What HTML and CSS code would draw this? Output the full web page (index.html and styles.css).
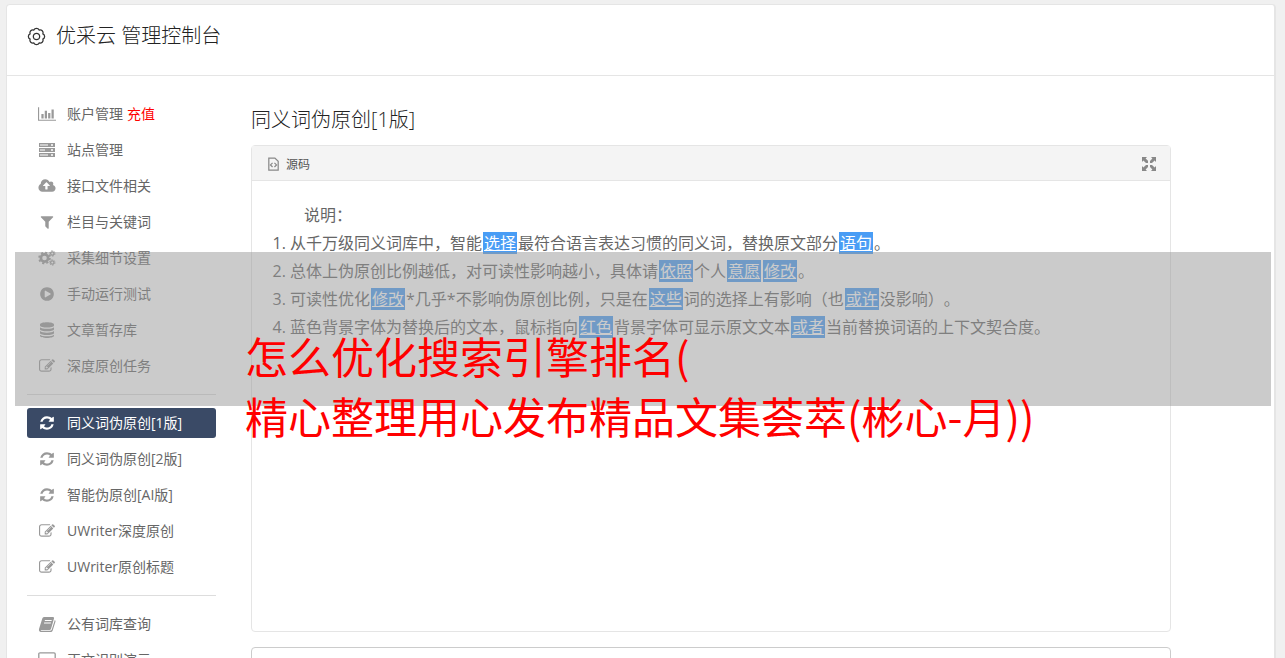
FILE: index.html
```html
<!DOCTYPE html>
<html lang="zh-CN">
<head>
    <meta charset="UTF-8">
    <meta name="viewport" content="width=device-width, initial-scale=1.0">
    <title>优采云 管理控制台</title>
    <link rel="stylesheet" href="styles.css">
</head>
<body>
    <!-- icon sprite -->
    <svg class="sprite" aria-hidden="true">
        <symbol id="i-chart" viewBox="0 0 2048 1792"><path d="M640 896v512h-256v-512h256zm384-384v896h-256v-896h256zm1024 1024v128h-2048v-1536h128v1408h1920zm-640-768v640h-256v-640h256zm384-384v1024h-256v-1024h256z"/></symbol>
        <symbol id="i-server" viewBox="0 0 18 16"><path fill-rule="evenodd" d="M1 1h16v4H1zM2 2.500h8v1H2zM13 2.200h2v1.600h-2zM1 6h16v4H1zM2 7.500h5v1H2zM13 7.200h2v1.600h-2zM1 11h16v4H1zM2 12.500h8v1H2zM13 12.200h2v1.600h-2z"/></symbol>
        <symbol id="i-cloud" viewBox="0 0 1920 1792"><path d="M1280 864q0-14-9-23l-352-352q-9-9-23-9t-23 9l-351 351q-10 12-10 24 0 14 9 23t23 9h224v352q0 13 9.500 22.500t22.500 9.500h192q13 0 22.500-9.500t9.500-22.500v-352h224q13 0 22.500-9.500t9.500-22.500zm640 288q0 159-112.500 271.500t-271.500 112.500h-1088q-185 0-316.500-131.500t-131.500-316.500q0-130 70-240t188-165q-2-30-2-43 0-212 150-362t362-150q156 0 285.500 87t188.500 231q71-62 166-62 106 0 181 75t75 181q0 76-41 138 130 31 213.500 135.500t83.500 238.500z"/></symbol>
        <symbol id="i-filter" viewBox="0 0 1792 1792"><path d="M1595 295q17 41-14 70l-493 493v742q0 42-39 59-13 5-25 5-27 0-45-19l-256-256q-19-19-19-45v-486l-493-493q-31-29-14-70 17-39 59-39h1280q42 0 59 39z"/></symbol>
        <symbol id="i-cogs" viewBox="0 0 18 16">
            <g fill="none" stroke="currentColor">
                <circle cx="6.500" cy="8" r="3.600" stroke-width="2.600"/>
                <circle cx="6.500" cy="8" r="5.400" stroke-width="1.800" stroke-dasharray="2.120 2.120"/>
                <circle cx="14.300" cy="3.500" r="1.700" stroke-width="1.300"/>
                <circle cx="14.300" cy="3.500" r="2.700" stroke-width="1" stroke-dasharray="1.400 1.420"/>
                <circle cx="14.300" cy="12.500" r="1.700" stroke-width="1.300"/>
                <circle cx="14.300" cy="12.500" r="2.700" stroke-width="1" stroke-dasharray="1.400 1.420"/>
            </g>
        </symbol>
        <symbol id="i-play" viewBox="0 0 1792 1792"><path d="M896 128q209 0 385.500 103t279.500 279.500 103 385.500-103 385.500-279.500 279.500-385.500 103-385.500-103-279.500-279.500-103-385.500 103-385.500 279.500-279.500 385.500-103zm384 823q32-18 32-55t-32-55l-544-320q-31-19-64-1-32 19-32 56v640q0 37 32 56 16 8 32 8 17 0 32-9z"/></symbol>
        <symbol id="i-database" viewBox="0 0 16 16"><path d="M1 2.500C1 -.5 15 -.5 15 2.500v1C15 6.300 1 6.300 1 3.500zM1 5.200c2 2.200 12 2.200 14 0v2c0 2.700-14 2.700-14 0zM1 9c2 2.200 12 2.200 14 0v2c0 2.700-14 2.700-14 0zM1 12.700c2 2.200 12 2.200 14 0v1c0 2.900-14 2.900-14 0z"/></symbol>
        <symbol id="i-edit" viewBox="0 0 1792 1792"><path d="M888 1184l116-116-152-152-116 116v56h96v96h56zm440-720q-16-16-33 1l-350 350q-17 17-1 33t33-1l350-350q17-17 1-33zm80 594v190q0 119-84.500 203.500t-203.500 84.500h-832q-119 0-203.500-84.500t-84.500-203.500v-832q0-119 84.500-203.500t203.500-84.500h832q63 0 117 25 15 7 18 23 3 17-9 29l-49 49q-14 14-32 8-23-6-45-6h-832q-66 0-113 47t-47 113v832q0 66 47 113t113 47h832q66 0 113-47t47-113v-126q0-13 9-22l64-64q15-15 35-7t20 29zm-96-738l288 288-672 672h-288v-288zm444 132l-92 92-288-288 92-92q28-28 68-28t68 28l152 152q28 28 28 68t-28 68z"/></symbol>
        <symbol id="i-refresh" viewBox="0 0 1792 1792"><path d="M1639 1056q0 5-1 7-64 268-268 434.500t-478 166.500q-146 0-282.500-55t-243.500-157l-129 129q-19 19-45 19t-45-19-19-45v-448q0-26 19-45t45-19h448q26 0 45 19t19 45-19 45l-137 137q71 66 161 102t187 36q134 0 250-65t186-179q11-17 53-117 8-23 30-23h192q13 0 22.500 9.500t9.500 22.500zm25-800v448q0 26-19 45t-45 19h-448q-26 0-45-19t-19-45 19-45l138-138q-148-137-349-137-134 0-250 65t-186 179q-11 17-53 117-8 23-30 23h-199q-13 0-22.500-9.500t-9.500-22.500v-7q65-268 270-434.500t480-166.500q146 0 284 55.500t245 156.500l130-129q19-19 45-19t45 19 19 45z"/></symbol>
        <symbol id="i-book" viewBox="0 0 18 16"><path fill-rule="evenodd" d="M6 1h9q1.500 0 1 1.500L13 13q-.5 1-1.500 1H3.500q-1 0-.7.800h9q1.500 0 2-1.200L16.800 4q1 .5.700 1.500L14.700 14.500q-.5 1.500-2 1.500H3q-2.500-.5-2-3L4.300 2.500Q4.700 1 6 1zM7 4l-.3 1h6.800l.3-1zM6.200 6.500l-.3 1h6.800l.3-1z"/></symbol>
        <symbol id="i-desktop" viewBox="0 0 18 16"><path fill="none" stroke="currentColor" stroke-width="1.300" d="M2 .8h14q1.200 0 1.200 1.200v9q0 1.200-1.200 1.200H2Q.8 12.200.8 11V2Q.8.800 2 .800zM5 15h8M9 12v3"/></symbol>
        <symbol id="i-setting" viewBox="-9 -9 18 18">
            <g fill="none" stroke="currentColor" stroke-width="1.200">
                <path d="M6.100-2.530A2.800 2.800 0 0 1 6.100 2.530 2.800 2.800 0 0 1 2.530 6.100 2.800 2.800 0 0 1-2.530 6.100 2.800 2.800 0 0 1-6.100 2.530 2.800 2.800 0 0 1-6.100-2.530 2.800 2.800 0 0 1-2.530-6.100 2.800 2.800 0 0 1 2.530-6.100 2.800 2.800 0 0 1 6.100-2.530z"/>
                <circle r="3"/>
            </g>
        </symbol>
        <symbol id="i-source" viewBox="0 0 16 16"><path fill="none" stroke="currentColor" stroke-width="1.300" d="M3 1.700h6.500L13 5v9.500H3zM7 6.800L4.800 9 7 11.200M9 6.800L11.200 9 9 11.200"/></symbol>
        <symbol id="i-expand" viewBox="0 0 14 14"><path d="M0 0h5L3.600 1.400 6 3.800V6H4L1.400 3.600 0 5zM14 0v5l-1.400-1.400L10 6H8V4l2.400-2.600L9 0zM0 14V9l1.400 1.400L4 8h2v2l-2.400 2.600L5 14zM14 14H9l1.400-1.400L8 10V8h2l2.600 2.400L14 9z"/></symbol>
    </svg>

    <div class="page">
        <header class="page-header">
            <svg class="logo"><use href="#i-setting"/></svg>
            <h1>优采云 管理控制台</h1>
        </header>

        <div class="content">
            <nav class="sidebar">
                <ul>
                    <li><a href="#"><svg><use href="#i-chart"/></svg>账户管理</a> <a class="recharge" href="#">充值</a></li>
                    <li><a href="#"><svg><use href="#i-server"/></svg>站点管理</a></li>
                    <li><a href="#"><svg><use href="#i-cloud"/></svg>接口文件相关</a></li>
                    <li><a href="#"><svg><use href="#i-filter"/></svg>栏目与关键词</a></li>
                    <li><a href="#"><svg><use href="#i-cogs"/></svg>采集细节设置</a></li>
                    <li><a href="#"><svg><use href="#i-play"/></svg>手动运行测试</a></li>
                    <li><a href="#"><svg><use href="#i-database"/></svg>文章暂存库</a></li>
                    <li><a href="#"><svg><use href="#i-edit"/></svg>深度原创任务</a></li>
                </ul>
                <ul>
                    <li class="active"><a href="#"><svg><use href="#i-refresh"/></svg>同义词伪原创[1版]</a></li>
                    <li><a href="#"><svg><use href="#i-refresh"/></svg>同义词伪原创[2版]</a></li>
                    <li><a href="#"><svg><use href="#i-refresh"/></svg>智能伪原创[AI版]</a></li>
                    <li><a href="#"><svg><use href="#i-edit"/></svg>UWriter深度原创</a></li>
                    <li><a href="#"><svg><use href="#i-edit"/></svg>UWriter原创标题</a></li>
                </ul>
                <ul>
                    <li><a href="#"><svg><use href="#i-book"/></svg>公有词库查询</a></li>
                    <li><a href="#"><svg><use href="#i-desktop"/></svg>正文识别演示</a></li>
                </ul>
            </nav>

            <main>
                <h2>同义词伪原创[1版]</h2>
                <div class="editor">
                    <div class="toolbar">
                        <button type="button"><svg><use href="#i-source"/></svg>源码</button>
                        <button type="button" aria-label="全屏"><svg class="expand"><use href="#i-expand"/></svg></button>
                    </div>
                    <div class="editor-body">
                        <p>说明：</p>
                        <ol>
                            <li>从千万级同义词库中，智能<u>选择</u>最符合语言表达习惯的同义词，替换原文部分<u>语句</u>。</li>
                            <li>总体上伪原创比例越低，对可读性影响越小，具体请<u>依照</u>个人<u>意愿</u><u>修改</u>。</li>
                            <li>可读性优化<u>修改</u>*几乎*不影响伪原创比例，只是在<u>这些</u>词的选择上有影响（也<u>或许</u>没影响）。</li>
                            <li>蓝色背景字体为替换后的文本，鼠标指向<u>红色</u>背景字体可显示原文文本<u>或者</u>当前替换词语的上下文契合度。</li>
                        </ol>
                    </div>
                </div>
                <textarea class="result" aria-label="结果"></textarea>
            </main>
        </div>
    </div>

    <div class="banner">
        <p>怎么优化搜索引擎排名(<br>精心整理用心发布精品文集荟萃(彬心-月))</p>
    </div>
</body>
</html>
```
FILE: styles.css
```css
* {
    box-sizing: border-box;
}
body {
    position: relative;
    height: 100vh;
    margin: 0;
    padding: 4px 9px 0 6px;
    overflow: hidden;
    background: #f0f0f0;
    color: #666;
    font-family: "Open Sans", "Noto Sans CJK SC", sans-serif;
    font-size: 14px;
}
svg {
    fill: currentColor;
    flex: none;
}
ul, ol, p, h1, h2 {
    margin: 0;
    padding: 0;
}
.sprite {
    position: absolute;
    width: 0;
    height: 0;
}
.page {
    background: #fff;
    border: 1px solid #e5e5e5;
    border-right-width: 2px;
    border-radius: 4px;
}
.page-header {
    display: flex;
    align-items: center;
    gap: 10px;
    height: 71px;
    padding: 0 20px 8px;
    border-bottom: 1px solid #e5e5e5;
    color: #333;
}
.logo {
    width: 19px;
    height: 19px;
}
h1, h2 {
    color: #222;
    font-size: 20px;
    font-weight: 300;
    line-height: 28px;
}
.content {
    display: flex;
    gap: 35px;
    padding: 23px 20px;
}

/* sidebar */
.sidebar {
    flex: none;
    width: 189px;
}
.sidebar ul {
    list-style: none;
}
.sidebar ul + ul {
    margin-top: 13px;
    padding-top: 13px;
    border-top: 1px solid #ddd;
}
.sidebar li {
    display: flex;
    align-items: center;
    gap: 4px;
    height: 30px;
    padding-left: 11px;
    border-radius: 3px;
}
.sidebar li + li {
    margin-top: 6px;
}
.sidebar a {
    display: flex;
    align-items: center;
    gap: 11px;
    color: #666;
    line-height: 30px;
    text-decoration: none;
}
.sidebar svg {
    width: 18px;
    height: 16px;
    color: #999;
}
.sidebar .recharge {
    color: #f00;
}
.sidebar .active {
    background: #3a4a66;
}
.sidebar .active a, .sidebar .active svg {
    color: #fff;
}

/* editor */
main {
    flex: 1;
    max-width: 920px;
    padding-top: 7px;
}
.editor {
    margin-top: 11px;
    border: 1px solid #e5e5e5;
    border-radius: 4px;
}
.toolbar {
    display: flex;
    align-items: center;
    justify-content: space-between;
    height: 35px;
    padding: 2px 14px 0;
    background: #f4f4f4;
    border-bottom: 1px solid #e5e5e5;
}
.toolbar button {
    display: flex;
    align-items: center;
    gap: 5px;
    padding: 0;
    border: none;
    background: none;
    color: #555;
    font-family: inherit;
    font-size: 12px;
    cursor: pointer;
}
.toolbar svg {
    width: 15px;
    height: 16px;
    color: #888;
}
.toolbar .expand {
    width: 14px;
    height: 14px;
}
.editor-body {
    min-height: 450px;
    padding: 20px;
    font-size: 16px;
    line-height: 28px;
    text-spacing-trim: space-all;
}
.editor-body p {
    text-indent: 2em;
}
.editor-body ol {
    padding-left: 18px;
}
.editor-body u {
    margin: 0 1px;
    padding: 0 1px;
    background: #499df5;
    color: #fff;
}
.result {
    display: block;
    width: 100%;
    height: 120px;
    margin-top: 15px;
    border: 1px solid #ccc;
    border-radius: 4px;
    resize: none;
}

/* translucent strip laid over the page */
.banner {
    position: absolute;
    top: 252px;
    left: 15px;
    right: 14px;
    height: 154px;
    padding: 73px 0 0 230px;
    background: rgba(152, 152, 152, 0.5);
    color: #f00;
    font-family: "Noto Sans CJK SC", sans-serif;
    font-size: 43px;
    line-height: 60px;
    white-space: nowrap;
}
```
